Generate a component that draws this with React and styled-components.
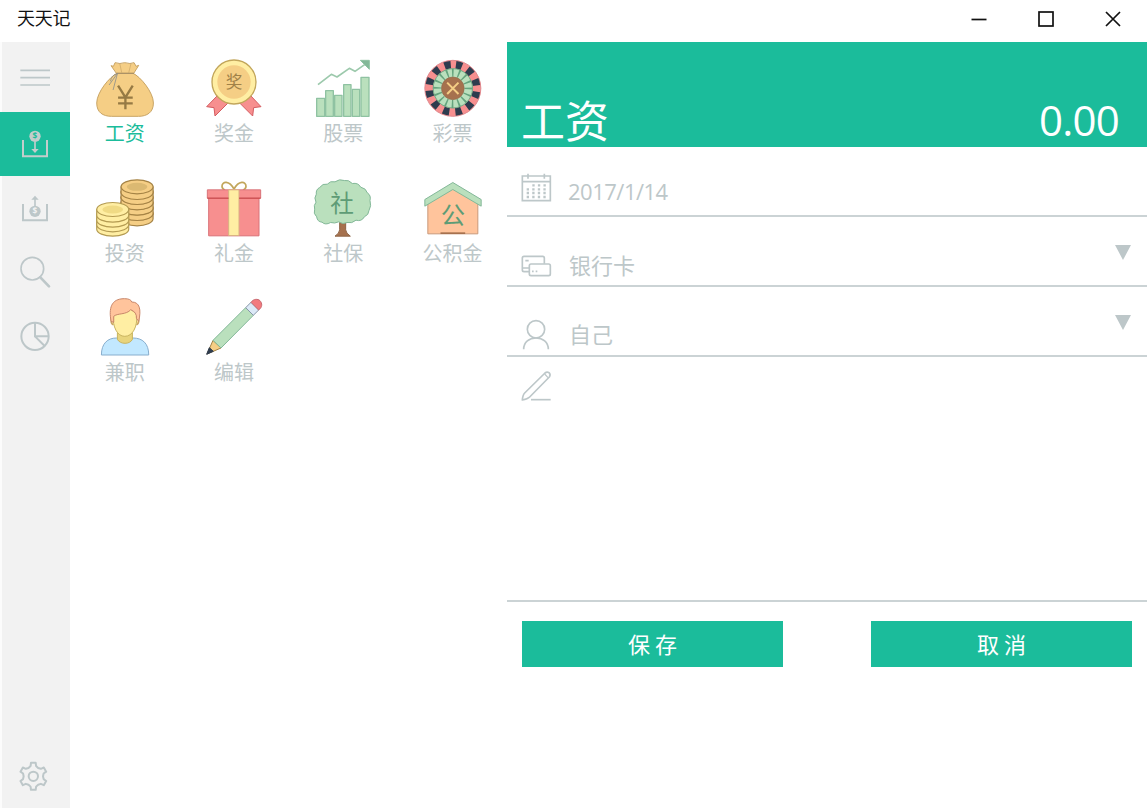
import React, { useState } from 'react';
import styled, { createGlobalStyle } from 'styled-components';

const GREEN = '#1bbc9b';
const GREY = '#bdc7c9';

const GlobalStyle = createGlobalStyle`
    * {
        box-sizing: border-box;
    }

    body {
        margin: 0;
        background: #fff;
        font-family: "Open Sans", "Noto Sans CJK SC", sans-serif;
    }
`;

const Window = styled.div`
    display: flex;
    flex-direction: column;
    width: 1147px;
    height: 810px;
    overflow: hidden;
    background: #fff;
`;

const TitleBar = styled.header`
    display: flex;
    justify-content: space-between;
    height: 42px;
    padding-left: 17px;
`;

const AppName = styled.span`
    font-family: "Noto Sans CJK SC", sans-serif;
    font-size: 18px;
    line-height: 35px;
    letter-spacing: -0.3px;
    color: #111;
`;

const WindowButtons = styled.div`
    display: flex;
    padding-right: 1px;
`;

const WindowButton = styled.button`
    width: 67px;
    height: 38px;
    padding: 0;
    border: 0;
    background: none;
    color: #111;

    svg {
        display: block;
        margin: 0 auto;
    }
`;

const Body = styled.div`
    display: flex;
    height: 768px;
`;

const SideBar = styled.nav`
    display: flex;
    flex-direction: column;
    width: 70px;
    height: 766px;
    background: linear-gradient(to right, #fcfcfc 2px, #f2f2f2 2px);
`;

const SideItem = styled.button`
    display: flex;
    align-items: center;
    justify-content: center;
    flex: none;
    width: 70px;
    height: ${(props) => (props.$tall ? '70px' : '64px')};
    margin-top: ${(props) => (props.$last ? 'auto' : '0')};
    padding: 0;
    border: 0;
    background: ${(props) => (props.$active ? GREEN : 'transparent')};
    color: ${(props) => (props.$active ? '#c3cdcc' : GREY)};
`;

const Categories = styled.main`
    display: grid;
    grid-template-columns: repeat(4, 109.3px);
    grid-auto-rows: 119.5px;
    align-content: start;
    width: 437px;
    padding-top: 16px;
`;

const Category = styled.button`
    display: flex;
    flex-direction: column;
    align-items: center;
    padding: 0;
    border: 0;
    background: none;
    color: ${(props) => (props.$active ? GREEN : GREY)};
`;

const CategoryName = styled.span`
    font-family: "Noto Sans CJK SC", sans-serif;
    font-size: 20px;
    font-weight: 400;
    line-height: 29px;
    white-space: nowrap;
`;

const Panel = styled.section`
    display: flex;
    flex-direction: column;
    width: 640px;
`;

const Banner = styled.div`
    display: flex;
    align-items: flex-end;
    justify-content: space-between;
    height: 105px;
    padding: 0 28px 0 14px;
    background: ${GREEN};
    color: #fff;
`;

const BannerName = styled.span`
    font-family: "Noto Sans CJK SC", sans-serif;
    font-size: 44px;
    font-weight: 400;
    line-height: 55px;
`;

const Amount = styled.span`
    font-size: 42px;
    line-height: 55px;
    letter-spacing: -0.8px;
`;

const Field = styled.div`
    display: flex;
    align-items: flex-start;
    height: 70px;
    padding: ${(props) => props.$top}px 16px 0 14px;
    border-bottom: 2px solid #cbd3d5;
    color: ${GREY};
`;

const FieldText = styled.span`
    flex: 1;
    margin-top: -2px;
    margin-left: 18px;
    font-size: 22px;
    font-weight: 400;
    line-height: 30px;
    font-family: "Noto Sans CJK SC", sans-serif;
`;

const DateText = styled(FieldText)`
    margin-top: 4px;
    margin-left: 17px;
    font-family: "Open Sans", sans-serif;
    letter-spacing: -0.5px;
`;

const Arrow = styled.i`
    margin-top: ${(props) => props.$shift}px;
    border: 8.5px solid transparent;
    border-top: 15px solid ${GREY};
    border-bottom: 0;
`;

const Note = styled.div`
    height: 245px;
    padding: 14px;
    border-bottom: 2px solid #cbd3d5;
    color: ${GREY};
`;

const Actions = styled.div`
    display: flex;
    justify-content: space-between;
    padding: 19px 15px 0;
`;

const ActionButton = styled.button`
    width: 261px;
    height: 46px;
    padding: 0 0 2px;
    border: 0;
    background: ${GREEN};
    color: #fff;
    font-family: "Noto Sans CJK SC", sans-serif;
    font-size: 22px;
    font-weight: 400;
`;

// line icons share a 90 unit box drawn at 30px
const LineSvg = styled.svg`
    display: block;
    flex: none;
    width: 30px;
    height: 30px;
    overflow: visible;
    fill: none;
    stroke: currentColor;
    stroke-width: 5;
`;

const CoinSign = styled.text`
    font-family: "Open Sans", sans-serif;
    font-size: 25px;
    font-weight: 700;
    text-anchor: middle;
    stroke: none;
    fill: ${(props) => props.$color};
`;

const Picture = styled.svg`
    display: block;
    width: 60px;
    height: 60px;
    stroke-width: 3;
    stroke-linejoin: round;
`;

const PictureText = styled.text`
    font-family: "Noto Sans CJK SC", sans-serif;
    text-anchor: middle;
    stroke: none;
`;

const MenuIcon = () => (
    <LineSvg viewBox="0 0 90 90">
        <path d="M1 25H90M1 47H90M1 69H90" />
    </LineSvg>
);

const IncomeIcon = () => (
    <LineSvg viewBox="0 0 90 90">
        <path d="M9 33V82H81V33" strokeWidth="6" />
        <circle cx="45" cy="22" r="17" fill="currentColor" stroke="none" />
        <CoinSign x="45" y="31" $color={GREEN}>$</CoinSign>
        <path d="M45 38V64" />
        <path d="M34 60H56L45 72Z" fill="currentColor" stroke="none" />
    </LineSvg>
);

const ExpenseIcon = () => (
    <LineSvg viewBox="0 0 90 90">
        <path d="M9 33V82H81V33" strokeWidth="6" />
        <circle cx="45" cy="55" r="17" fill="currentColor" stroke="none" />
        <CoinSign x="45" y="64" $color="#f2f2f2">$</CoinSign>
        <path d="M45 40V16" />
        <path d="M34 20H56L45 8Z" fill="currentColor" stroke="none" />
    </LineSvg>
);

const SearchIcon = () => (
    <LineSvg viewBox="0 0 90 90">
        <circle cx="37" cy="35" r="34" />
        <path d="M61 61L87 88" strokeWidth="8" strokeLinecap="round" />
    </LineSvg>
);

const PieIcon = () => (
    <LineSvg viewBox="0 0 90 90">
        <circle cx="45" cy="46" r="41" strokeWidth="6" />
        <path d="M45 5V46H86M45 46L74 75" strokeWidth="6" />
    </LineSvg>
);

const gearPoints = [0, 60, 120, 180, 240, 300]
    .flatMap((a) => [[a - 10, 41], [a + 10, 41], [a + 15, 32], [a + 30, 29], [a + 45, 32]])
    .map(([a, r]) => {
        const t = (a * Math.PI) / 180;
        return `${(40 + r * Math.sin(t)).toFixed(1)},${(46 - r * Math.cos(t)).toFixed(1)}`;
    })
    .join(' ');

const GearIcon = () => (
    <LineSvg viewBox="0 0 90 90">
        <polygon points={gearPoints} strokeWidth="6" strokeLinejoin="round" />
        <circle cx="40" cy="46" r="14" strokeWidth="6" />
    </LineSvg>
);

const CalendarIcon = () => (
    <LineSvg viewBox="0 0 90 90">
        <path d="M4 12H88V86H4ZM4 29H88M21 5V20M70 5V20" />
        <path d="M34 40H75M17 52H75M17 63H75M17 75H75" strokeDasharray="7 9.7" strokeWidth="7" />
    </LineSvg>
);

const CardIcon = () => (
    <LineSvg viewBox="0 0 90 90">
        <path d="M24 62H9Q4 62 4 57V21Q4 16 9 16H65Q70 16 70 21V38M4 51H24M13 29H23" />
        <rect x="25" y="39" width="63" height="35" rx="5" />
        <path d="M33 61H38M44 61H49" />
    </LineSvg>
);

const PersonIcon = () => (
    <LineSvg viewBox="0 0 90 90">
        <circle cx="45" cy="28" r="26" />
        <path d="M8 88C8 66 25 54 45 54S82 66 82 88" />
    </LineSvg>
);

const PenIcon = () => (
    <LineSvg viewBox="0 0 90 90">
        <path d="M4 87C5 76 6 71 11 66L72 6Q78 1 84 5Q90 11 85 18L26 78C20 84 15 85 4 87Z" strokeLinejoin="round" />
        <path d="M71 9L81 20" strokeWidth="3.5" />
        <path d="M30 86H89" />
    </LineSvg>
);

const BagPicture = () => (
    <Picture viewBox="31.8 24 180 180" fill="#f5ce85" stroke="#c9a566">
        <path d="M96 70L80 47L87 49L92 38Q106 43 121 38Q138 43 149 38L155 49L163 46L148 70Z" />
        <path d="M98 70H146C168 80 207 127 207 159C207 187 188 199 162 199H82C55 199 37 187 37 159C37 127 76 80 98 70Z" />
        <path d="M106 40L112 68M140 40L133 68" strokeWidth="2" />
        <path d="M95 70H149" stroke="#a58d65" />
        <path d="M100 69L74 105M99 71L86 120M95 72Q82 76 78 94" fill="none" stroke="#8c8f8d" strokeWidth="2.5" />
        <path d="M101 107L123 142L145 107M123 142V178M101 143H145M101 160H145" fill="none" stroke="#967a44" strokeWidth="7" />
    </Picture>
);

const MedalPicture = () => (
    <Picture viewBox="360 24 180 180" fill="#f78f8f" stroke="#d45c61">
        <path d="M402 135L368 170L390 173L393 198L431 160Z" />
        <path d="M498 135L531 170L509 173L506 198L468 160Z" />
        <circle cx="450" cy="96" r="66" fill="#ffeea3" stroke="#c2a65b" strokeWidth="4" />
        <circle cx="450" cy="96" r="50" fill="#f5ce85" stroke="none" />
        <PictureText x="450" y="115" fontSize="50" fill="#a08148">奖</PictureText>
    </Picture>
);

const StockPicture = () => (
    <Picture viewBox="40 24 180 180" fill="#bae0bd" stroke="#8fc2a2">
        <g strokeWidth="4">
            <rect x="51" y="145" width="24" height="54" />
            <rect x="78" y="122" width="23" height="77" />
            <rect x="105" y="136" width="22" height="63" />
            <rect x="132" y="104" width="22" height="95" />
            <rect x="158" y="118" width="22" height="81" />
            <rect x="184" y="82" width="24" height="117" />
        </g>
        <path d="M55 104L95 73L112 81L149 55L166 64L196 43" fill="none" strokeWidth="5" stroke="#9cc9ac" />
        <path d="M182 31H209V58Z" fill="#83b898" />
    </Picture>
);

// one pocket of the wheel is 15 degrees
const pocket = (71 * Math.PI) / 12;
const spoke = (47 * Math.PI) / 8;

const RoulettePicture = () => (
    <Picture viewBox="367.5 24 180 180" fill="none">
        <circle cx="457" cy="115" r="84" fill="#f78f8f" stroke="#e08a8f" />
        <circle
            cx="457" cy="115" r="71" stroke="#2e3c4e" strokeWidth="23"
            strokeDasharray={`${pocket} ${pocket}`} transform="rotate(-82.5 457 115)"
        />
        <circle cx="457" cy="115" r="59" fill="#bae0bd" stroke="#72ab87" strokeWidth="3" />
        <circle
            cx="457" cy="115" r="47" stroke="#66a47e" strokeWidth="24"
            strokeDasharray={`${spoke * 0.26} ${spoke * 0.74}`} transform="rotate(-92.9 457 115)"
        />
        <circle cx="457" cy="115" r="34" fill="#a6714e" stroke="#8f6d4f" strokeWidth="2" />
        <path d="M440 98L474 132M474 98L440 132" stroke="#f5ce85" strokeWidth="6" />
    </Picture>
);

const Coin = ({ x, y, rim, face }) => (
    <>
        <path d={`M${x - 48} ${y}V${y + 17}A48 21 0 0 0 ${x + 48} ${y + 17}V${y}Z`} />
        <ellipse cx={x} cy={y} rx="48" ry="21" fill={rim} />
        <ellipse cx={x} cy={y} rx="31" ry="12" fill={face} stroke="none" />
    </>
);

const CoinsPicture = () => (
    <Picture viewBox="31.8 22.5 180 180">
        <g fill="#f5ce85" stroke="#a58345" strokeWidth="3.6">
            {[128, 112, 96, 80, 64, 49].map((y) => (
                <Coin key={y} x={158} y={y} rim="#f5ce85" face="#dbb972" />
            ))}
        </g>
        <g fill="#ffeea3" stroke="#b49b52" strokeWidth="3.6">
            {[159, 146, 132, 117].map((y) => (
                <Coin key={y} x={85} y={y} rim="#ffeea3" face="#f0da84" />
            ))}
        </g>
    </Picture>
);

const GiftPicture = () => (
    <Picture viewBox="360 22.5 180 180" fill="#f78f8f" stroke="#d97379">
        <path d="M450 56C436 29 414 32 414 47C414 52 419 57 423 59M450 56C464 29 486 32 486 47C486 52 481 57 477 59" fill="none" stroke="#c2a65b" strokeWidth="5" />
        <rect x="374" y="82" width="151" height="114" />
        <rect x="370" y="58" width="160" height="25" />
        <rect x="434" y="58" width="31" height="137" fill="#ffeea3" stroke="#d9b282" />
        <path d="M370 83H434M465 83H530" stroke="#c74343" />
    </Picture>
);

const TreePicture = () => (
    <Picture viewBox="40 22.5 180 180">
        <path d="M120 155H138V178Q139 189 152 197H106Q119 189 120 178Z" fill="#a6714e" stroke="#8d6345" />
        <path
            d="M83 41Q92 30 106 34Q119 24 134 30Q147 27 158 39Q176 36 183 50Q199 53 203 67Q215 75 211 90Q216 106 208 120Q207 134 194 139Q186 154 169 149Q157 160 142 156Q130 163 117 154Q105 160 93 156Q77 165 67 155Q53 154 51 139Q40 129 45 116Q41 105 49 95Q42 82 50 71Q48 57 60 51Q69 38 83 41Z"
            fill="#bae0bd" stroke="#83b898"
        />
        <PictureText x="127" y="123" fontSize="71" fill="#5e9c76">社</PictureText>
    </Picture>
);

const HousePicture = () => (
    <Picture viewBox="367.5 22.5 180 180">
        <path d="M382 190V92L457 45L532 92V190Z" fill="#ffc49c" stroke="#c9997a" />
        <path d="M373 87L457 36L542 87V107L457 57L373 107Z" fill="#bae0bd" stroke="#83b898" />
        <path d="M420 188H494" stroke="#a6714e" strokeWidth="5" />
        <PictureText x="457" y="161" fontSize="73" fill="#5e9c76">公</PictureText>
    </Picture>
);

const WorkerPicture = () => (
    <Picture viewBox="31.8 21 180 180">
        <path d="M51 195C51 160 70 144 96 144H146C174 144 193 160 193 195Z" fill="#c2e8ff" stroke="#88aecd" />
        <path d="M99 128V148C107 164 137 164 144 148V128Z" fill="#e8d47c" stroke="#c9b45f" />
        <path d="M80 76V93Q79 100 87 105M163 76V93Q164 100 156 105" fill="#f5ce85" stroke="#c9a566" strokeWidth="4" />
        <path d="M86 72C84 112 99 139 121 139C144 139 160 112 157 72L137 57L90 68Z" fill="#ffeea3" stroke="#c9b45f" />
        <path d="M80 94C73 56 79 26 120 26C133 26 140 29 142 36C166 36 171 58 163 94L156 85Q158 67 139 59C126 75 98 69 88 79V97Z" fill="#ffc49c" stroke="#c9876a" />
    </Picture>
);

const PencilPicture = () => (
    <Picture viewBox="360 21 180 180">
        <path d="M387 151L411 174L369 192Z" fill="#f5ce85" stroke="#a58345" />
        <path d="M376 173L388 184L368 193Z" fill="#2e3c4e" stroke="#2e3c4e" />
        <path d="M485 53L508 76L411 174L387 151Z" fill="#bae0bd" stroke="#83b898" />
        <path d="M485 53L501 37L524 60L508 76Z" fill="#dce9f7" stroke="#8796a8" />
        <path d="M501 37C509 26 521 26 528 32C535 40 536 51 524 60Z" fill="#f2797e" stroke="#c96b72" />
    </Picture>
);

const categories = [
    { name: '工资', Icon: BagPicture },
    { name: '奖金', Icon: MedalPicture },
    { name: '股票', Icon: StockPicture },
    { name: '彩票', Icon: RoulettePicture },
    { name: '投资', Icon: CoinsPicture },
    { name: '礼金', Icon: GiftPicture },
    { name: '社保', Icon: TreePicture },
    { name: '公积金', Icon: HousePicture },
    { name: '兼职', Icon: WorkerPicture },
    { name: '编辑', Icon: PencilPicture },
];

function App() {
    const [selected, setSelected] = useState('工资');

    return (
        <Window>
            <GlobalStyle />
            <TitleBar>
                <AppName>天天记</AppName>
                <WindowButtons>
                    <WindowButton aria-label="minimize">
                        <svg width="16" height="16" fill="none" stroke="currentColor" strokeWidth="1.7">
                            <path d="M0.5 8.5H15.5" />
                        </svg>
                    </WindowButton>
                    <WindowButton aria-label="maximize">
                        <svg width="16" height="16" fill="none" stroke="currentColor" strokeWidth="1.7">
                            <rect x="1" y="1" width="14" height="14" />
                        </svg>
                    </WindowButton>
                    <WindowButton aria-label="close">
                        <svg width="16" height="16" fill="none" stroke="currentColor" strokeWidth="1.7">
                            <path d="M1 1L15 15M15 1L1 15" />
                        </svg>
                    </WindowButton>
                </WindowButtons>
            </TitleBar>

            <Body>
                <SideBar>
                    <SideItem $tall><MenuIcon /></SideItem>
                    <SideItem $active><IncomeIcon /></SideItem>
                    <SideItem><ExpenseIcon /></SideItem>
                    <SideItem><SearchIcon /></SideItem>
                    <SideItem><PieIcon /></SideItem>
                    <SideItem $last><GearIcon /></SideItem>
                </SideBar>

                <Categories>
                    {categories.map(({ name, Icon }) => (
                        <Category key={name} $active={name === selected} onClick={() => setSelected(name)}>
                            <Icon />
                            <CategoryName>{name}</CategoryName>
                        </Category>
                    ))}
                </Categories>

                <Panel>
                    <Banner>
                        <BannerName>{selected}</BannerName>
                        <Amount>0.00</Amount>
                    </Banner>
                    <Field $top={25}>
                        <CalendarIcon />
                        <DateText>2017/1/14</DateText>
                    </Field>
                    <Field $top={34}>
                        <CardIcon />
                        <FieldText>银行卡</FieldText>
                        <Arrow $shift={-6} />
                    </Field>
                    <Field $top={33}>
                        <PersonIcon />
                        <FieldText>自己</FieldText>
                        <Arrow $shift={-5} />
                    </Field>
                    <Note>
                        <PenIcon />
                    </Note>
                    <Actions>
                        <ActionButton>保 存</ActionButton>
                        <ActionButton>取 消</ActionButton>
                    </Actions>
                </Panel>
            </Body>
        </Window>
    );
}

export default App;
